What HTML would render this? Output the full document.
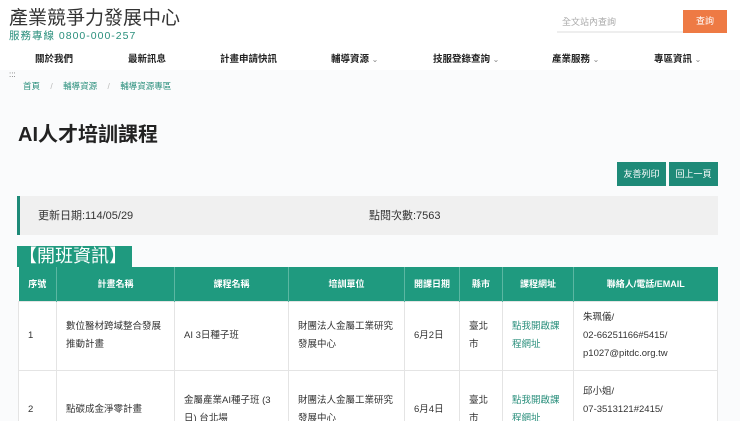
<!DOCTYPE html>
<html><head><meta charset="utf-8"><style>
*{margin:0;padding:0;box-sizing:border-box}
html,body{width:740px;height:421px;overflow:hidden}
body{background:#fafbfc;font-family:"Liberation Sans","Noto Sans CJK TC",sans-serif;color:#333}
#w{position:relative;width:740px;height:421px;overflow:hidden}
.hdr{position:absolute;left:0;top:0;width:740px;height:70px;background:#fff}
.title{position:absolute;left:9px;top:3px;font-size:19px;color:#333}
.tel{position:absolute;left:9px;top:28px;font-size:10.5px;color:#2a8f7c;letter-spacing:1px}
.search{position:absolute;left:557px;top:10px;width:126px;height:23px;border-bottom:2px solid #eee;font-size:9px;color:#aaa;padding:5px 0 0 5px}
.sbtn{position:absolute;left:683px;top:10px;width:44px;height:23px;background:#ee7a44;color:#fff;font-size:9px;text-align:center;line-height:23px}
.nav span{position:absolute;top:51px;font-size:9.5px;color:#222;font-weight:bold}
.bc{position:absolute;top:80px;font-size:8.5px;color:#2a8f7c}
h1{position:absolute;left:18px;top:118px;font-size:20px;font-weight:bold;color:#222}
.btn{position:absolute;top:162px;width:49px;height:24px;background:#1e8a78;color:#fff;font-size:9px;text-align:center;line-height:24px}
.info{position:absolute;left:17px;top:196px;width:701px;height:39px;background:#f0f0f0;border-left:3px solid #1e8a78;font-size:11px;color:#333}
.tag{position:absolute;left:17px;top:246px;width:115px;height:21px;background:#1f9a7f;color:#fff;font-size:18px;line-height:21px;padding-left:2px}
table{position:absolute;left:18px;top:267px;width:700px;border-collapse:collapse;font-size:9.5px;background:#fff;table-layout:fixed}
th{background:#1f9a7f;color:#fff;height:34px;font-weight:bold;border-left:1px solid #5bb7a2;font-size:9px}
td{border:1px solid #e4e4e4;padding:0 9px;line-height:18px;vertical-align:middle;color:#333}
a{color:#2a8f7c;text-decoration:none}
</style></head><body><div id="w">
<div class="hdr">
<div class="title">產業競爭力發展中心</div>
<div class="tel">服務專線 0800-000-257</div>
<div class="search">全文站內查詢</div>
<div class="sbtn">查詢</div>
<div class="nav">
<span style="left:35px">關於我們</span>
<span style="left:128px">最新訊息</span>
<span style="left:220px">計畫申請快訊</span>
<span style="left:331px">輔導資源 <small style="font-weight:normal;color:#888">⌄</small></span>
<span style="left:433px">技服登錄查詢 <small style="font-weight:normal;color:#888">⌄</small></span>
<span style="left:552px">產業服務 <small style="font-weight:normal;color:#888">⌄</small></span>
<span style="left:654px">專區資訊 <small style="font-weight:normal;color:#888">⌄</small></span>
</div></div>
<div style="position:absolute;left:9px;top:73px;font-size:8px;color:#666;line-height:4px">:::</div>
<div class="bc" style="left:23px">首頁 <span style="color:#bbb;margin:0 8px">/</span> 輔導資源 <span style="color:#bbb;margin:0 8px">/</span> 輔導資源專區</div>
<h1>AI人才培訓課程</h1>
<div class="btn" style="left:617px">友善列印</div>
<div class="btn" style="left:669px">回上一頁</div>
<div class="info"><span style="position:absolute;left:18px;top:11px">更新日期:114/05/29</span><span style="position:absolute;left:349px;top:11px">點閱次數:7563</span></div>
<div class="tag">【開班資訊】</div>
<table>
<colgroup><col style="width:38px"><col style="width:118px"><col style="width:114px"><col style="width:116px"><col style="width:55px"><col style="width:43px"><col style="width:71px"><col></colgroup>
<tr><th style="border-left:0">序號</th><th>計畫名稱</th><th>課程名稱</th><th>培訓單位</th><th>開課日期</th><th>縣市</th><th>課程網址</th><th>聯絡人/電話/EMAIL</th></tr>
<tr style="height:69px"><td>1</td><td>數位醫材跨域整合發展推動計畫</td><td>AI 3日種子班</td><td>財團法人金屬工業研究發展中心</td><td>6月2日</td><td>臺北市</td><td><a>點我開啟課程網址</a></td><td>朱珮儀/<br>02-66251166#5415/<br>p1027@pitdc.org.tw</td></tr>
<tr style="height:80px"><td>2</td><td>點碳成金淨零計畫</td><td>金屬產業AI種子班 (3日) 台北場</td><td>財團法人金屬工業研究發展中心</td><td>6月4日</td><td>臺北市</td><td><a>點我開啟課程網址</a></td><td>邱小姐/<br>07-3513121#2415/<br>mirdc@mail.mirdc.org.tw</td></tr>
</table>
</div></body></html>
